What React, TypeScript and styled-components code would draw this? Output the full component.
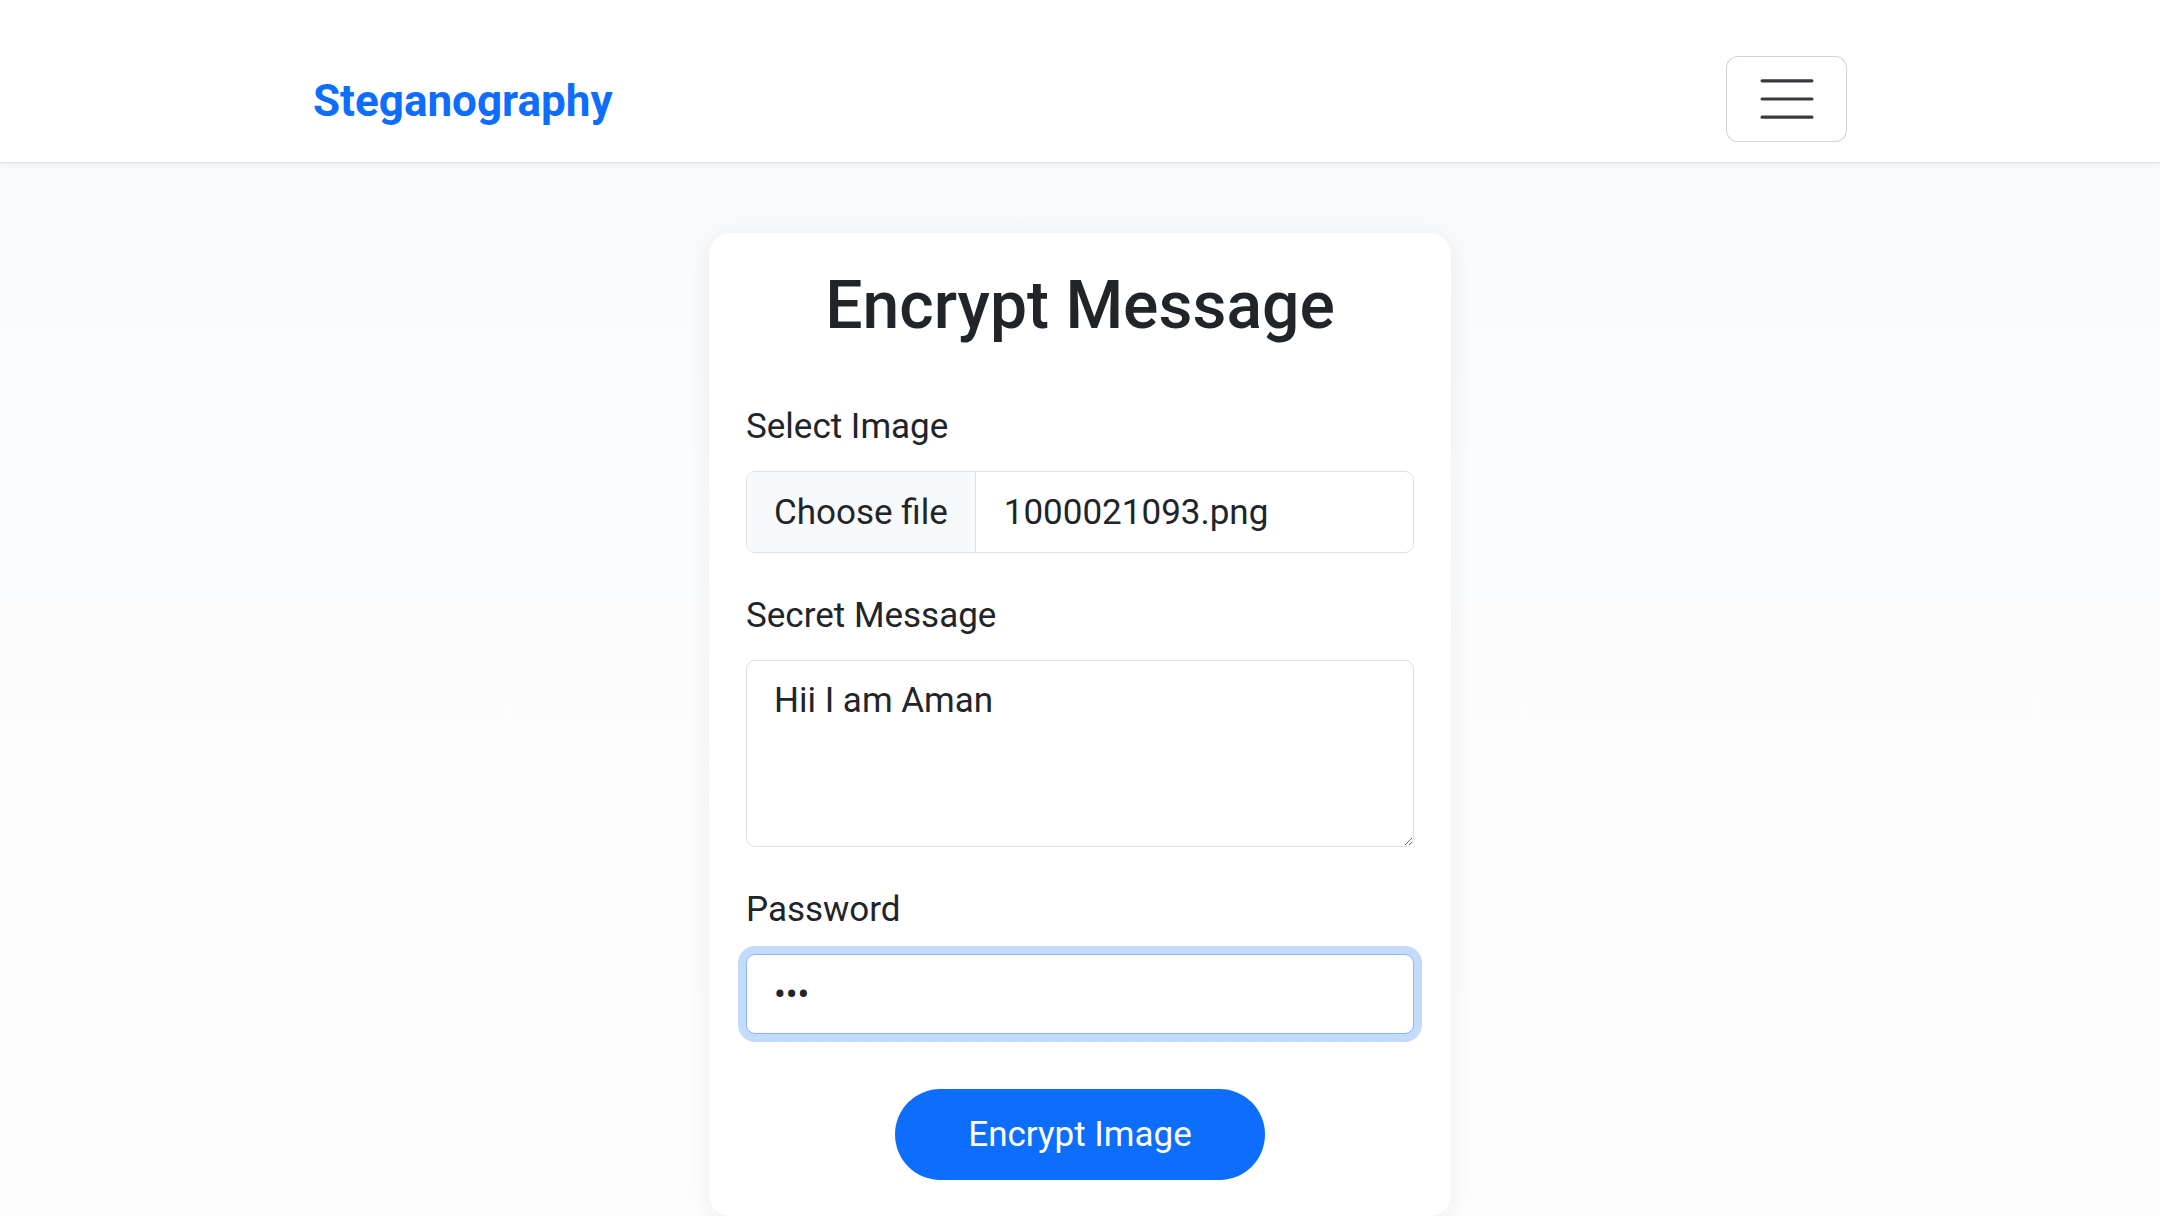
import React from 'react';
import styled, { createGlobalStyle } from 'styled-components';

const GlobalStyle = createGlobalStyle`
    html, body {
        margin: 0;
        padding: 0;
        background: #f8f9fb;
        font-family: Roboto, "Liberation Sans", Arial, sans-serif;
        color: #212529;
    }
    * {
        box-sizing: border-box;
    }
`;

const Page = styled.div`
    min-height: 1216px;
    background: linear-gradient(180deg, #f7f8fa 0%, #fbfcfd 40%, #fdfdfe 100%);
`;

const NavBar = styled.nav`
    background: #ffffff;
    border-bottom: 1px solid #dfe3e8;
    box-shadow: 0 2px 6px rgba(0, 0, 0, 0.04);
    padding: 56px 0 20px;
`;

const NavInner = styled.div`
    width: 1534px;
    margin: 0 auto;
    display: flex;
    align-items: center;
    justify-content: space-between;
`;

const Brand = styled.a`
    font-size: 44px;
    font-weight: 700;
    color: #0d6efd;
    text-decoration: none;
    line-height: 63px;
    margin-top: 5px;
`;

const Toggler = styled.button`
    width: 121px;
    height: 86px;
    background: #fff;
    border: 1px solid rgba(0, 0, 0, 0.18);
    border-radius: 12px;
    display: flex;
    align-items: center;
    justify-content: center;
    padding: 0;
    cursor: pointer;
`;

const Main = styled.main`
    display: flex;
    justify-content: center;
    padding-top: 70px;
`;

const Card = styled.div`
    width: 742px;
    background: #fff;
    border-radius: 21px;
    box-shadow: 0 4px 24px rgba(30, 40, 60, 0.07);
    padding: 33px 37px 36px;
`;

const Title = styled.h2`
    margin: 0 0 56px;
    font-size: 66px;
    font-weight: 500;
    line-height: 79px;
    text-align: center;
    color: #212529;
`;

const Field = styled.div`
    margin-bottom: 37px;
`;

const Label = styled.label`
    display: block;
    font-size: 35px;
    line-height: 51px;
    margin-bottom: 19px;
    color: #212529;
`;

const FileBox = styled.div`
    display: flex;
    height: 82px;
    border: 1px solid #dee2e6;
    border-radius: 9px;
    overflow: hidden;
    font-size: 35px;
`;

const FileButton = styled.span`
    display: flex;
    align-items: center;
    padding: 0 27px;
    background: #f8f9fa;
    border-right: 1px solid #dee2e6;
    color: #212529;
`;

const FileName = styled.span`
    display: flex;
    align-items: center;
    padding: 0 28px;
    color: #212529;
`;

const TextArea = styled.textarea`
    display: block;
    width: 100%;
    height: 187px;
    border: 1px solid #dee2e6;
    border-radius: 9px;
    padding: 14px 27px;
    font-family: Roboto, "Liberation Sans", Arial, sans-serif;
    font-size: 35px;
    line-height: 51px;
    color: #212529;
    outline: none;
`;

const Input = styled.input<{ focused?: boolean }>`
    display: block;
    width: 100%;
    height: 80px;
    border: 1px solid ${p => (p.focused ? '#86b7fe' : '#dee2e6')};
    border-radius: 9px;
    padding: 0 27px;
    font-family: Roboto, "Liberation Sans", Arial, sans-serif;
    font-size: 35px;
    color: #212529;
    outline: none;
    box-shadow: ${p => (p.focused ? '0 0 0 8px rgba(13, 110, 253, 0.25)' : 'none')};
`;

const Actions = styled.div`
    display: flex;
    justify-content: center;
    padding-top: 18px;
`;

const PrimaryButton = styled.button`
    height: 91px;
    padding: 0 73px;
    border: none;
    border-radius: 46px;
    background: #0d6efd;
    color: #fff;
    font-family: Roboto, "Liberation Sans", Arial, sans-serif;
    font-size: 35px;
    cursor: pointer;
`;

const MenuIcon = () => (
    <svg width="68" height="68" viewBox="0 0 30 30" fill="none">
        <path
            d="M4 7h22M4 15h22M4 23h22"
            stroke="rgba(33, 37, 41, 0.9)"
            strokeWidth="1.4"
            strokeLinecap="round"
        />
    </svg>
);

const App: React.FC = () => {
    return (
        <Page>
            <GlobalStyle />
            <NavBar>
                <NavInner>
                    <Brand href="#">Steganography</Brand>
                    <Toggler aria-label="Toggle navigation">
                        <MenuIcon />
                    </Toggler>
                </NavInner>
            </NavBar>
            <Main>
                <Card>
                    <Title>Encrypt Message</Title>
                    <Field>
                        <Label>Select Image</Label>
                        <FileBox>
                            <FileButton>Choose file</FileButton>
                            <FileName>1000021093.png</FileName>
                        </FileBox>
                    </Field>
                    <Field>
                        <Label>Secret Message</Label>
                        <TextArea readOnly value="Hii I am Aman" />
                    </Field>
                    <Field>
                        <Label>Password</Label>
                        <Input type="password" readOnly value="abc" focused />
                    </Field>
                    <Actions>
                        <PrimaryButton>Encrypt Image</PrimaryButton>
                    </Actions>
                </Card>
            </Main>
        </Page>
    );
};

export default App;
